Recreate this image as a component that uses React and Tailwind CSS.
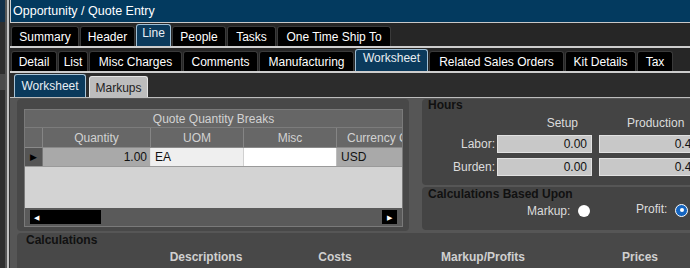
import React from 'react';

const topTabs = [
  { label: 'Summary', w: 'w-[68px]' },
  { label: 'Header', w: 'w-[55px]' },
  { label: 'Line', w: 'w-[35px]', active: true },
  { label: 'People', w: 'w-[54px]' },
  { label: 'Tasks', w: 'w-[49px]' },
  { label: 'One Time Ship To', w: 'w-[114px]' },
];

const lineTabs = [
  { label: 'Detail', w: 'w-[46px]' },
  { label: 'List', w: 'w-[30px]' },
  { label: 'Misc Charges', w: 'w-[93px]' },
  { label: 'Comments', w: 'w-[75px]' },
  { label: 'Manufacturing', w: 'w-[95px]' },
  { label: 'Worksheet', w: 'w-[73px]', active: true },
  { label: 'Related Sales Orders', w: 'w-[135px]' },
  { label: 'Kit Details', w: 'w-[71px]' },
  { label: 'Tax', w: 'w-[36px]' },
];

const Tab = ({ label, w, active }) =>
  active ? (
    <div className={`${w} h-[22px] shrink-0 rounded-t-[3px] border border-b-0 border-[#9fbfd6] bg-[#0b3a5c] text-[#e8eef3] flex justify-center pt-[2px]`}>
      {label}
    </div>
  ) : (
    <div className={`${w} h-[20px] shrink-0 rounded-t-[3px] border-t border-x border-[#3a3a3a] bg-black text-white flex items-center justify-center pt-[1px]`}>
      {label}
    </div>
  );

const TabRow = ({ tabs }) => (
  <div className="h-[23px] bg-[#262626] flex items-end gap-px pl-px">
    {tabs.map((t) => (
      <Tab key={t.label} {...t} />
    ))}
  </div>
);

const Radio = ({ checked }) =>
  checked ? (
    <div className="w-[13px] h-[13px] shrink-0 rounded-full bg-[#1565c0] border border-white flex items-center justify-center">
      <div className="w-[4px] h-[4px] rounded-full bg-white" />
    </div>
  ) : (
    <div className="w-[12px] h-[12px] shrink-0 rounded-full bg-white" />
  );

const QuoteGrid = () => (
  <div className="w-[379px] h-[118px] border border-[#7a7a7a] bg-[#d3d3d3] flex flex-col overflow-hidden">
    <div className="h-[18px] shrink-0 bg-[#666] text-[#d2d2d2] flex items-center justify-center pt-[1px] border-b border-[#7c7c7c]">
      Quote Quantity Breaks
    </div>
    <div className="h-[20px] shrink-0 bg-[#676767] text-[#d2d2d2] flex border-b border-[#8a8a8a]">
      <div className="w-[18px] border-r border-[#858585]" />
      <div className="w-[108px] border-r border-[#858585] flex items-center justify-center">Quantity</div>
      <div className="w-[93px] border-r border-[#858585] flex items-center justify-center">UOM</div>
      <div className="w-[93px] border-r border-[#858585] flex items-center justify-center">Misc</div>
      <div className="flex-1 pl-[10px] flex items-center whitespace-nowrap overflow-hidden">Currency Co</div>
    </div>
    <div className="h-[19px] shrink-0 flex text-[#111] border-b border-[#9a9a9a]">
      <div className="w-[18px] bg-[#555] border-r border-[#777] flex items-center justify-center text-black text-[9px]">▶</div>
      <div className="w-[108px] bg-[#a9a9a9] border-r border-[#e5e5e5] flex items-center justify-end pr-[3px]">1.00</div>
      <div className="w-[93px] bg-[#efefef] border-r border-[#d0d0d0] flex items-center pl-[4px]">EA</div>
      <div className="w-[93px] bg-white border-r border-[#bdbdbd]" />
      <div className="flex-1 bg-[#a9a9a9] flex items-center pl-[4px]">USD</div>
    </div>
    <div className="flex-1" />
    <div className="h-[18px] shrink-0 bg-[#5a5a5a] flex items-center px-[5px]">
      <div className="w-[71px] h-[14px] bg-black flex items-center pl-[4px] text-white text-[7px]">◀</div>
      <div className="flex-1" />
      <div className="w-[15px] h-[14px] bg-black flex items-center justify-center text-white text-[7px]">▶</div>
    </div>
  </div>
);

const HoursInput = ({ value, wide }) => (
  <div className={`${wide ? 'w-[104px]' : 'w-[95px]'} h-[18px] shrink-0 bg-[#c8c8c8] border border-[#e2e2e2] flex items-center justify-end pr-[4px] text-[#111]`}>
    {value}
  </div>
);

export default function App() {
  return (
    <div className="w-[690px] h-[268px] overflow-hidden flex bg-[#2e2e2e] font-['Liberation_Sans',Arial,sans-serif] text-[12px] leading-none">
      {/* left edge of the neighbouring window */}
      <div className="w-[10px] shrink-0 flex">
        <div className="w-[5px] flex flex-col">
          <div className="h-[22px] bg-[#12304a]" />
          <div className="h-[52px] bg-[#2e2e2e]" />
          <div className="h-[16px] bg-[#4a4a4a]" />
          <div className="flex-1 bg-[#2e2e2e]" />
        </div>
        <div className="w-[2px] bg-[#555]" />
        <div className="w-[2px] bg-[#c2c2c2]" />
        <div className="w-px bg-[#333]" />
      </div>

      <div className="flex-1 min-w-0 flex flex-col">
        <div className="h-[23px] shrink-0 bg-[#033a5f] border-b border-[#c8c8c8] border-l border-l-[#cfcfcf] text-white text-[12.5px] flex items-center pl-[2px]">
          Opportunity / Quote Entry
        </div>
        <TabRow tabs={topTabs} />
        <div className="h-[2px] bg-[#cdcdcd]" />
        <TabRow tabs={lineTabs} />
        <div className="h-[2px] bg-[#cdcdcd]" />

        <div className="h-[25px] shrink-0 bg-[#2c2c2c] flex items-end gap-[3px] pl-[4px] border-b border-[#bdbdbd]">
          <div className="w-[72px] h-[23px] rounded-t-[3px] border border-b-0 border-[#a8c4d8] bg-[#0b3a5c] text-[#e8eef3] flex items-center justify-center">
            Worksheet
          </div>
          <div className="w-[59px] h-[21px] rounded-t-[3px] border border-b-0 border-[#e4e4e4] bg-[#bdbdbd] text-[#222] flex items-center justify-center pt-[2px]">
            Markups
          </div>
        </div>

        <div className="flex-1 bg-[#565656] flex flex-col">
          <div className="h-[133px] shrink-0 flex pt-[1px]">
            <div className="ml-[7px] w-[392px] shrink-0 rounded-[4px] bg-[#484848] pl-[7px] pt-[10px]">
              <QuoteGrid />
            </div>
            <div className="ml-[13px] flex-1 min-w-0 flex flex-col gap-[2px] pb-[1px]">
              <div className="h-[86px] shrink-0 rounded-l-[4px] bg-[#444] pl-[6px] flex flex-col">
                <div className="font-bold text-[#111] h-[12px] flex items-center">Hours</div>
                <div className="flex mt-[4px] text-[#dcdcdc]">
                  <div className="w-[69px] shrink-0" />
                  <div className="w-[95px] shrink-0 pr-[14px] h-[16px] flex items-center justify-end">Setup</div>
                  <div className="w-[7px] shrink-0" />
                  <div className="w-[104px] shrink-0 pl-[28px] h-[16px] flex items-center">Production</div>
                </div>
                <div className="flex items-center mt-[4px] text-[#dcdcdc]">
                  <div className="w-[67px] shrink-0 text-right">Labor:</div>
                  <div className="w-[2px] shrink-0" />
                  <HoursInput value="0.00" />
                  <div className="w-[7px] shrink-0" />
                  <HoursInput value="0.45" wide />
                </div>
                <div className="flex items-center mt-[5px] text-[#dcdcdc]">
                  <div className="w-[67px] shrink-0 text-right">Burden:</div>
                  <div className="w-[2px] shrink-0" />
                  <HoursInput value="0.00" />
                  <div className="w-[7px] shrink-0" />
                  <HoursInput value="0.45" wide />
                </div>
              </div>
              <div className="flex-1 rounded-l-[4px] bg-[#444] pl-[6px] flex flex-col">
                <div className="font-bold text-[#111] h-[14px] flex items-center">Calculations Based Upon</div>
                <div className="flex items-center mt-[4px] text-[#dcdcdc]">
                  <div className="ml-[99px] w-[51px] shrink-0">Markup:</div>
                  <Radio />
                  <div className="ml-[46px] w-[39px] shrink-0 -mt-[4px]">Profit:</div>
                  <div className="-mt-[2px]"><Radio checked /></div>
                </div>
              </div>
            </div>
          </div>

          <div className="flex-1 mt-[2px] ml-[7px] rounded-tl-[4px] bg-[#484848] pl-[9px] flex flex-col">
            <div className="font-bold text-[#111] h-[14px] flex items-center">Calculations</div>
            <div className="flex mt-[4px] -ml-[9px] font-bold text-[#d0d0d0]">
              <div className="w-[129px] shrink-0" />
              <div className="w-[120px] shrink-0 text-center">Descriptions</div>
              <div className="w-[138px] shrink-0 text-center">Costs</div>
              <div className="w-[158px] shrink-0 text-center">Markup/Profits</div>
              <div className="w-[156px] shrink-0 text-center">Prices</div>
            </div>
          </div>
        </div>
      </div>
    </div>
  );
}
